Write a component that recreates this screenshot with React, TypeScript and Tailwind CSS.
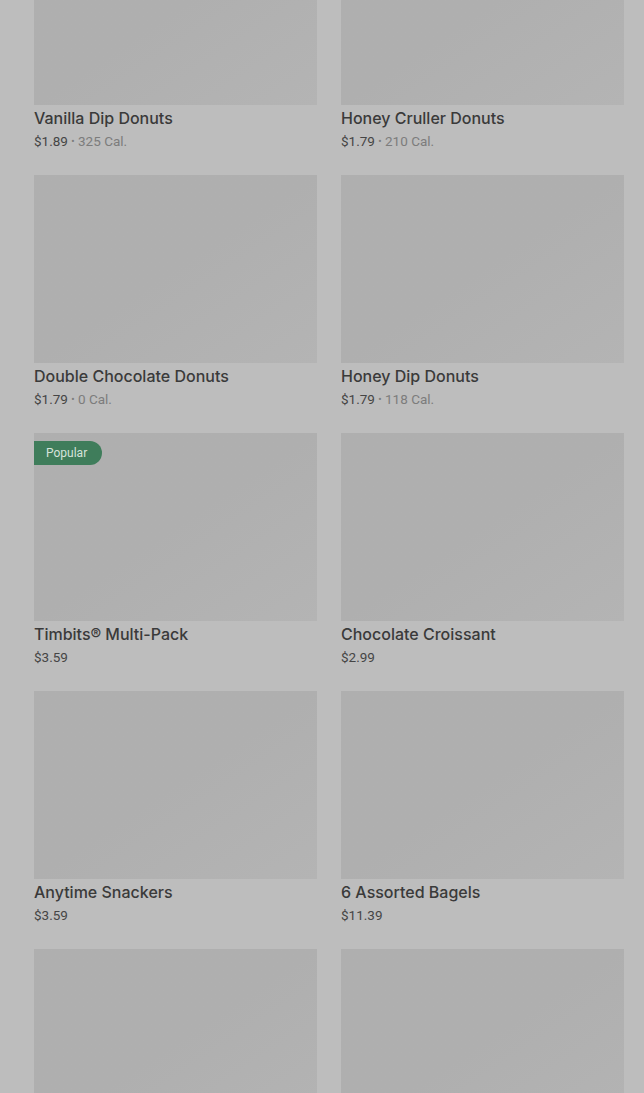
import React from "react";

type Item = {
  name?: string;
  price?: string;
  cal?: string;
  popular?: boolean;
};

const ITEMS: Item[] = [
  { name: "Vanilla Dip Donuts", price: "$1.89", cal: "325 Cal." },
  { name: "Honey Cruller Donuts", price: "$1.79", cal: "210 Cal." },
  { name: "Double Chocolate Donuts", price: "$1.79", cal: "0 Cal." },
  { name: "Honey Dip Donuts", price: "$1.79", cal: "118 Cal." },
  { name: "Timbits® Multi-Pack", price: "$3.59", popular: true },
  { name: "Chocolate Croissant", price: "$2.99" },
  { name: "Anytime Snackers", price: "$3.59" },
  { name: "6 Assorted Bagels", price: "$11.39" },
  {},
  {},
];

function MenuCard({ item }: { item: Item }) {
  return (
    <div className="flex flex-col">
      <div className="relative h-[188px] bg-gradient-to-br from-[#afafaf] via-[#afafaf] to-[#b4b4b4]">
        {item.popular && (
          <span className="absolute left-0 top-[8px] h-[24px] flex items-center pl-[12px] pr-[15px] rounded-r-full bg-[#3f7d5b] text-[12px] text-[#d6e3db] leading-none">
            Popular
          </span>
        )}
      </div>
      {item.name && (
        <>
          <p className="mt-[2px] h-[22px] text-[16px] leading-[22px] font-medium text-[#3a3a3a]" style={{ fontFamily: "Inter, Roboto, sans-serif" }}>
            {item.name}
          </p>
          <p className="mt-[2px] h-[20px] text-[13.5px] leading-[20px] text-[#454545]">
            {item.price}
            {item.cal && (
              <span className="text-[#7c7c7c]">
                {" "}
                <span className="text-[10px] align-[1px]">•</span> {item.cal}
              </span>
            )}
          </p>
        </>
      )}
    </div>
  );
}

export default function App() {
  return (
    <div
      className="h-[1093px] w-[644px] overflow-hidden bg-[#bdbdbd]"
      style={{ fontFamily: "Roboto, 'Noto Sans', sans-serif" }}
    >
      <div className="-mt-[83px] pl-[34px] pr-[20px] grid grid-cols-2 gap-x-[24px] gap-y-[24px]">
        {ITEMS.map((item, i) => (
          <MenuCard key={i} item={item} />
        ))}
      </div>
    </div>
  );
}
